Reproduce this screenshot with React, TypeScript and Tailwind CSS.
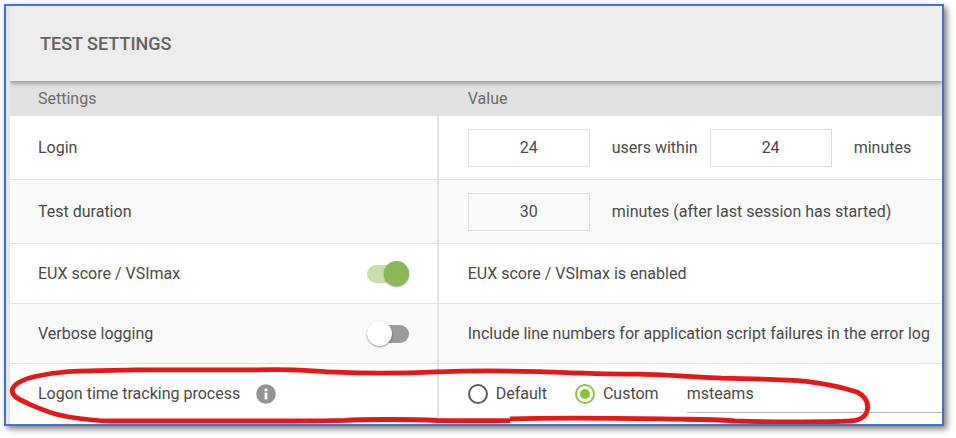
import { useState } from "react";
import type { ComponentProps, ReactNode } from "react";
import clsx from "clsx";

interface SettingRowProps {
  label: ReactNode;
  control?: ReactNode;
  tall?: boolean;
  children: ReactNode;
}

function SettingRow({ label, control, tall, children }: SettingRowProps) {
  return (
    <tr className={clsx("group even:bg-[#fafafa]", tall ? "h-16" : "h-15")}>
      <th
        scope="row"
        className="border-r-2 border-b border-[#e4e4e4] px-7 text-left font-normal group-last:border-b-0"
      >
        <div className="flex items-center justify-between">
          {label}
          {control}
        </div>
      </th>
      <td className="border-b border-[#e2e2e2] pl-[29px] group-last:border-b-0">{children}</td>
    </tr>
  );
}

function NumberBox(props: ComponentProps<"input">) {
  return (
    <input
      type="text"
      inputMode="numeric"
      className="h-[38px] w-[122px] border border-[#e0e0e0] bg-transparent text-center outline-none"
      {...props}
    />
  );
}

function Toggle(props: ComponentProps<"input">) {
  return (
    <input
      type="checkbox"
      role="switch"
      className="flex h-[18px] w-[42px] appearance-none items-center rounded-full bg-[#9b9b9b] before:size-[25px] before:shrink-0 before:rounded-full before:bg-white before:shadow-[0_1px_2px_rgba(0,0,0,0.4)] checked:justify-end checked:bg-[#c8dfab] checked:before:bg-[#8bb854]"
      {...props}
    />
  );
}

function Radio(props: ComponentProps<"input">) {
  return (
    <input
      type="radio"
      name="process"
      className="grid size-5 appearance-none place-items-center rounded-full border-2 border-[#5c5c5c] before:size-[10px] before:rounded-full checked:border-[#8bc540] checked:before:bg-[#8bc540]"
      {...props}
    />
  );
}

function InfoIcon() {
  return (
    <svg viewBox="0 0 20 20" className="size-5" aria-hidden="true">
      <circle cx="10" cy="10" r="9.8" fill="#949494" />
      <rect x="8.6" y="4.6" width="2.8" height="2.6" fill="#fff" />
      <rect x="8.6" y="8.6" width="2.8" height="6.8" fill="#fff" />
    </svg>
  );
}

// Hand-drawn marker loop around the last row
function Highlight() {
  return (
    <svg
      viewBox="6 364 936 60"
      preserveAspectRatio="none"
      className="pointer-events-none absolute bottom-0 left-0 h-[60px] w-full"
      fill="none"
      stroke="#e81717"
      strokeWidth="4.8"
      strokeLinejoin="round"
      aria-hidden="true"
    >
      <path d="M510 420.6 C475 421 455 420.7 437 420.5 C415 419.4 365 419 345 420.4 C320 421.2 300 421 273 421 H112 C92 421 78 418.5 65 416.2 C50 413.5 38 408 28 403.5 C17 398.5 12 395.5 12.2 390.5 C12.5 385 22 379.5 35 376.5 C46 374 56 372.5 68 371.6 C90 370.4 110 370.3 135 369.9 C185 369.6 230 370.4 273 369.7 C300 369.5 315 371.4 335 372.2 C365 373.3 410 373 437 371.8 C465 370.8 500 370.6 540 371.6 C575 372.8 605 374.2 640 374.2 C665 374.8 690 376.6 722 378.2 C755 379 780 379 806 381.3 C828 384 845 388 857 392 C865 396 868 401 867.6 408 C867 416 862 420 850 421 C825 422.3 765 422 735 421 C715 419.4 700 419.4 680 419.2 C640 418.6 570 417 510 418.8" />
    </svg>
  );
}

export default function App() {
  const [users, setUsers] = useState("24");
  const [minutes, setMinutes] = useState("24");
  const [duration, setDuration] = useState("30");
  const [process, setProcess] = useState("msteams");

  return (
    <div className="bg-white pt-1 pr-3 pb-3 pl-1 font-['Roboto',sans-serif] text-base text-[#4a4a4a]">
      <main className="relative border-2 border-[#4472c4] bg-white shadow-[3px_3px_6px_rgba(0,0,0,0.5)]">
        <div className="overflow-hidden border-l-4 border-[#e6e6e6]">
          <header className="relative flex h-[75px] items-center bg-[#ededed] px-[30px] shadow-[0_2px_5px_rgba(0,0,0,0.4)]">
            <h1 className="text-lg font-medium text-[#636363]">TEST SETTINGS</h1>
          </header>

          <table className="w-full table-fixed border-separate border-spacing-0">
            <thead>
              <tr className="h-[35px] bg-[#e2e2e2] text-left text-[#6b6b6b]">
                <th scope="col" className="w-[46%] pl-7 font-normal">
                  Settings
                </th>
                <th scope="col" className="pl-[29px] font-normal">
                  Value
                </th>
              </tr>
            </thead>
            <tbody>
              <SettingRow tall label={<label htmlFor="users">Login</label>}>
                <div className="flex items-center whitespace-nowrap">
                  <NumberBox id="users" value={users} onChange={(e) => setUsers(e.target.value)} />
                  <label htmlFor="users" className="pr-3 pl-[22px]">
                    users within
                  </label>
                  <NumberBox id="minutes" value={minutes} onChange={(e) => setMinutes(e.target.value)} />
                  <label htmlFor="minutes" className="pl-[22px]">
                    minutes
                  </label>
                </div>
              </SettingRow>
              <SettingRow tall label={<label htmlFor="duration">Test duration</label>}>
                <div className="flex items-center whitespace-nowrap">
                  <NumberBox id="duration" value={duration} onChange={(e) => setDuration(e.target.value)} />
                  <label htmlFor="duration" className="pl-[22px]">
                    minutes (after last session has started)
                  </label>
                </div>
              </SettingRow>
              <SettingRow
                label={<label htmlFor="eux">EUX score / VSImax</label>}
                control={<Toggle id="eux" defaultChecked />}
              >
                EUX score / VSImax is enabled
              </SettingRow>
              <SettingRow
                label={<label htmlFor="verbose">Verbose logging</label>}
                control={<Toggle id="verbose" />}
              >
                <span className="whitespace-nowrap">
                  Include line numbers for application script failures in the error log
                </span>
              </SettingRow>
              <SettingRow
                label={
                  <span className="flex items-center gap-4">
                    <label htmlFor="process">Logon time tracking process</label>
                    <InfoIcon />
                  </span>
                }
              >
                <div className="flex items-center gap-7">
                  <label className="flex items-center gap-2">
                    <Radio value="default" />
                    Default
                  </label>
                  <label className="flex items-center gap-2">
                    <Radio value="custom" defaultChecked />
                    Custom
                  </label>
                  <input
                    id="process"
                    type="text"
                    value={process}
                    onChange={(e) => setProcess(e.target.value)}
                    className="h-[38px] min-w-0 flex-1 border-b border-[#b5b5b5] bg-transparent outline-none"
                  />
                </div>
              </SettingRow>
            </tbody>
          </table>
        </div>
        <Highlight />
      </main>
    </div>
  );
}
